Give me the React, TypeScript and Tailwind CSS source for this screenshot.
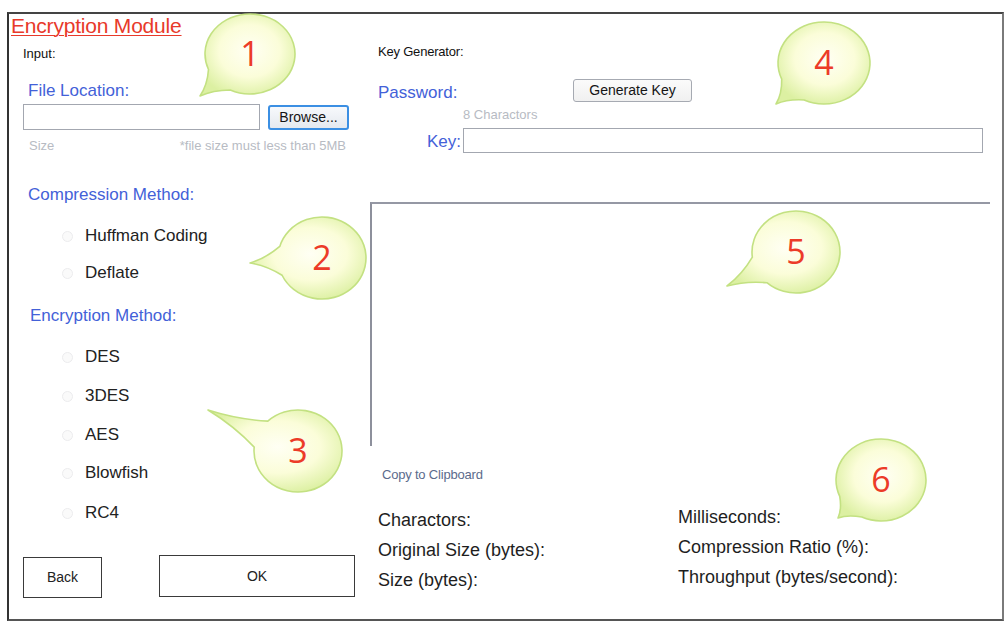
import React from "react";

type BubbleSpec = {
  n: string;
  cx: number;
  cy: number;
  rx: number;
  ry: number;
  tx: number;
  ty: number;
  w?: number;
};

const bubbles: BubbleSpec[] = [
  { n: "1", cx: 250, cy: 54, rx: 45, ry: 40, tx: 200, ty: 96 },
  { n: "4", cx: 824, cy: 63, rx: 46, ry: 41, tx: 776, ty: 104 },
  { n: "2", cx: 322, cy: 258, rx: 44, ry: 41, tx: 250, ty: 263 },
  { n: "3", cx: 298, cy: 451, rx: 44, ry: 41, tx: 208, ty: 410 },
  { n: "5", cx: 796, cy: 252, rx: 44, ry: 41, tx: 727, ty: 286 },
  { n: "6", cx: 881, cy: 480, rx: 45, ry: 41, tx: 838, ty: 518 },
];

// Speech-bubble outline: ellipse with a curved tail ending at (tx, ty)
function bubblePath(b: BubbleSpec): string {
  const w = b.w ?? 0.36;
  const theta = Math.atan2((b.ty - b.cy) / b.ry, (b.tx - b.cx) / b.rx);
  const pt = (a: number) => [b.cx + b.rx * Math.cos(a), b.cy + b.ry * Math.sin(a)];
  const [x1, y1] = pt(theta - w);
  const [x2, y2] = pt(theta + w);
  const mx = (x1 + x2) / 2;
  const my = (y1 + y2) / 2;
  const ax = mx + (b.tx - mx) * 0.45;
  const ay = my + (b.ty - my) * 0.45;
  const c1x = ((x1 + b.tx) / 2 + ax) / 2;
  const c1y = ((y1 + b.ty) / 2 + ay) / 2;
  const c2x = ((x2 + b.tx) / 2 + ax) / 2;
  const c2y = ((y2 + b.ty) / 2 + ay) / 2;
  return [
    `M ${x1} ${y1}`,
    `Q ${c1x} ${c1y} ${b.tx} ${b.ty}`,
    `Q ${c2x} ${c2y} ${x2} ${y2}`,
    `A ${b.rx} ${b.ry} 0 1 1 ${x1} ${y1}`,
    "Z",
  ].join(" ");
}

function Callouts() {
  return (
    <svg className="absolute inset-0 pointer-events-none" width={1006} height={621} viewBox="0 0 1006 621">
      <defs>
        <radialGradient id="bubbleFill" cx="0.52" cy="0.45" r="0.58">
          <stop offset="0" stopColor="#fffff4" />
          <stop offset="0.55" stopColor="#fbfdd9" />
          <stop offset="1" stopColor="#dcf0a2" />
        </radialGradient>
      </defs>
      {bubbles.map((b) => (
        <g key={b.n}>
          <path d={bubblePath(b)} fill="url(#bubbleFill)" stroke="#c3e182" strokeWidth={1.6} strokeLinejoin="round" />
          <text
            x={b.cx}
            y={b.cy + 12}
            textAnchor="middle"
            fontFamily="'Open Sans', 'Liberation Sans', sans-serif"
            fontSize={34}
            fill="#ec3b28"
          >
            {b.n}
          </text>
        </g>
      ))}
    </svg>
  );
}

function Radio({ label, mt }: { label: string; mt: string }) {
  return (
    <div className={`flex h-[20px] items-center pl-[53px] ${mt}`}>
      <span className="h-[11px] w-[11px] rounded-full border border-[#ececee] bg-[#fafafa]" />
      <span className="ml-[12px] text-[17px] text-[#222]">{label}</span>
    </div>
  );
}

export default function App() {
  return (
    <div className="relative h-[621px] w-[1006px] overflow-hidden bg-white font-['Liberation_Sans',Arial,sans-serif]">
      <div className="ml-[7px] mt-[12px] flex h-[609px] w-[997px] flex-col border-b-2 border-l-2 border-r-2 border-t-2 border-b-[#555] border-l-[#333] border-r-[#7a7a7a] border-t-[#444]">
        {/* Title */}
        <div className="h-[24px] pl-[2px] text-[21px] leading-[24px] tracking-[-0.2px] text-[#e8392a] underline decoration-1 underline-offset-[2px]">
          Encryption Module
        </div>

        <div className="flex flex-1">
          {/* Left panel */}
          <div className="flex w-[361px] flex-col">
            <div className="mt-[6px] flex h-[20px] items-center pl-[14px] text-[13px] text-[#111]">
              Input:
            </div>
            <div className="mt-[17px] flex h-[20px] items-center pl-[19px] text-[17px] text-[#4361d8]">
              File Location:
            </div>
            <div className="mt-[3px] flex h-[26px] items-center pl-[14px]">
              <div className="h-[26px] w-[237px] border border-[#a3a7b0] bg-white" />
              <button className="ml-[8px] h-[25px] w-[81px] rounded-[3px] border-2 border-[#3b8fe3] bg-gradient-to-b from-[#f7f9fc] to-[#e5e9ef] text-[14px] text-[#141414]">
                Browse...
              </button>
            </div>
            <div className="mt-[6px] flex h-[20px] items-center justify-between pl-[20px] pr-[24px] text-[13px] text-[#b7bbc3]">
              <span>Size</span>
              <span>*file size must less than 5MB</span>
            </div>

            <div className="mt-[29px] flex h-[20px] items-center pl-[19px] text-[17px] text-[#4361d8]">
              Compression Method:
            </div>
            <Radio label="Huffman Coding" mt="mt-[21px]" />
            <Radio label="Deflate" mt="mt-[17px]" />

            <div className="mt-[23px] flex h-[20px] items-center pl-[21px] text-[17px] text-[#4361d8]">
              Encryption Method:
            </div>
            <Radio label="DES" mt="mt-[21px]" />
            <Radio label="3DES" mt="mt-[19px]" />
            <Radio label="AES" mt="mt-[19px]" />
            <Radio label="Blowfish" mt="mt-[18px]" />
            <Radio label="RC4" mt="mt-[20px]" />

            <div className="mt-[32px] flex items-start pl-[14px]">
              <button className="mt-[2px] h-[41px] w-[79px] border border-[#3a3a3a] bg-white text-[14px] text-[#222]">
                Back
              </button>
              <button className="ml-[57px] h-[42px] w-[196px] border border-[#3a3a3a] bg-white text-[14px] text-[#222]">
                OK
              </button>
            </div>
          </div>

          {/* Right panel */}
          <div className="flex flex-1 flex-col">
            <div className="mt-[4px] flex h-[20px] items-center pl-[8px] text-[13px] tracking-[-0.2px] text-[#111]">
              Key Generator:
            </div>
            <div className="mt-[17px] flex h-[24px] items-start pl-[8px]">
              <span className="mt-[4px] w-[195px] text-[17px] leading-[20px] text-[#4361d8]">Password:</span>
              <button className="h-[23px] w-[119px] rounded-[3px] border border-[#a6aab2] bg-gradient-to-b from-[#fbfbfb] to-[#f0f0f0] text-[14px] text-[#141414]">
                Generate Key
              </button>
            </div>
            <div className="mt-[2px] flex h-[20px] items-center pl-[93px] text-[13px] text-[#b7bbc3]">
              8 Charactors
            </div>
            <div className="mt-[3px] flex h-[25px] items-center">
              <span className="w-[91px] pt-[2px] text-right text-[17px] text-[#4361d8]">Key:</span>
              <div className="ml-[2px] h-[25px] w-[520px] border border-[#a3a7b0] bg-white" />
            </div>

            {/* Output text box */}
            <div className="mt-[49px] h-[244px] w-[620px] border-l-2 border-t-2 border-l-[#8d909c] border-t-[#9598a4] bg-white" />

            <div className="mt-[19px] flex h-[20px] items-center pl-[12px] text-[13px] tracking-[-0.2px] text-[#5b6b8c]">
              Copy to Clipboard
            </div>

            <div className="flex text-[18px] text-[#1e1e1e]">
              <div className="mt-[25px] flex w-[308px] flex-col gap-[10px] pl-[8px]">
                <div className="h-[20px] leading-[20px]">Charactors:</div>
                <div className="h-[20px] leading-[20px]">Original Size (bytes):</div>
                <div className="h-[20px] leading-[20px]">Size (bytes):</div>
              </div>
              <div className="mt-[22px] flex flex-col gap-[10px]">
                <div className="h-[20px] leading-[20px]">Milliseconds:</div>
                <div className="h-[20px] leading-[20px]">Compression Ratio (%):</div>
                <div className="h-[20px] leading-[20px]">Throughput (bytes/second):</div>
              </div>
            </div>
          </div>
        </div>
      </div>

      <Callouts />
    </div>
  );
}
